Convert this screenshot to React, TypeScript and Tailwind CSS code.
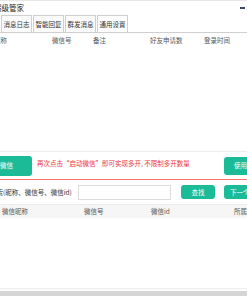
import React from "react";

const tabs = ["消息日志", "智能回复", "群发消息", "通用设置"];

export default function App() {
  return (
    <div className="w-[247px] h-[296px] overflow-hidden bg-white flex flex-col whitespace-nowrap font-['Noto_Sans_CJK_SC',sans-serif] text-[6.5px] leading-none text-[#333]">
      {/* Title */}
      <div className="h-[15px] shrink-0 border-t border-[#e6e6e6] flex items-center justify-between">
        <span className="ml-[-6px] text-[7.5px] text-[#222]">超级管家</span>
        <span className="mr-[2px] w-[5px] h-[2px] bg-[#3b4a5c]" />
      </div>

      {/* Tabs */}
      <div className="h-[18px] shrink-0 flex items-stretch gap-[1px] pl-[1px] border-b border-[#cfcfcf]">
        {tabs.map((t, i) => (
          <div
            key={t}
            className={`w-[31px] flex items-center justify-center border border-b-0 border-[#cfcfcf] ${i === 3 ? "bg-white" : "bg-[#fafafa]"}`}
          >
            {t}
          </div>
        ))}
      </div>

      {/* Friend table header */}
      <div className="h-[14px] shrink-0 flex items-center text-[#555]">
        <span className="ml-[-19px] w-[71px] shrink-0">微信昵称</span>
        <span className="w-[41px] shrink-0">微信号</span>
        <span className="w-[57px] shrink-0">备注</span>
        <span className="w-[54px] shrink-0">好友申请数</span>
        <span>登录时间</span>
      </div>

      <div className="h-[105px] shrink-0 border-b border-[#eeeeee]" />

      {/* Start row */}
      <div className="h-[28px] shrink-0 flex items-center border-b border-[#f87171]">
        <button className="ml-[-32px] w-[64px] h-[20px] shrink-0 rounded-[3px] bg-[#1cbb97] text-white flex items-center justify-center">
          启动微信
        </button>
        <span className="ml-[5px] mb-[4px] text-[#f0323c]">再次点击“启动微信”即可实现多开, 不限制多开数量</span>
        <button className="ml-auto mr-[-30px] w-[53px] h-[18px] shrink-0 rounded-[3px] bg-[#1cbb97] text-white flex items-center pl-[10px]">
          使用说明
        </button>
      </div>

      {/* Search row */}
      <div className="h-[24px] shrink-0 flex items-center">
        <span className="ml-[-10px] w-[88px] shrink-0">搜索(昵称、微信号、微信id)</span>
        <div className="w-[93px] h-[15px] shrink-0 border border-[#dcdcdc] bg-white" />
        <button className="ml-[10px] w-[34px] h-[14px] shrink-0 rounded-[3px] bg-[#1cbb97] text-white flex items-center justify-center">
          查找
        </button>
        <button className="ml-[9px] w-[40px] h-[14px] shrink-0 rounded-[3px] bg-[#1cbb97] text-white flex items-center pl-[6px]">
          下一个
        </button>
      </div>

      {/* Account table header */}
      <div className="h-[14px] shrink-0 flex items-center bg-[#f6f6f6] border-t border-[#ececec] text-[#555]">
        <span className="ml-[2px] w-[82px] shrink-0">微信昵称</span>
        <span className="w-[67px] shrink-0">微信号</span>
        <span className="w-[83px] shrink-0">微信id</span>
        <span>所属账号</span>
      </div>

      <div className="h-[71px] shrink-0 border-b border-[#eeeeee]" />
      <div className="h-[2px] shrink-0" />
      <div className="flex-1 bg-[#d6d6d6]" />
    </div>
  );
}
